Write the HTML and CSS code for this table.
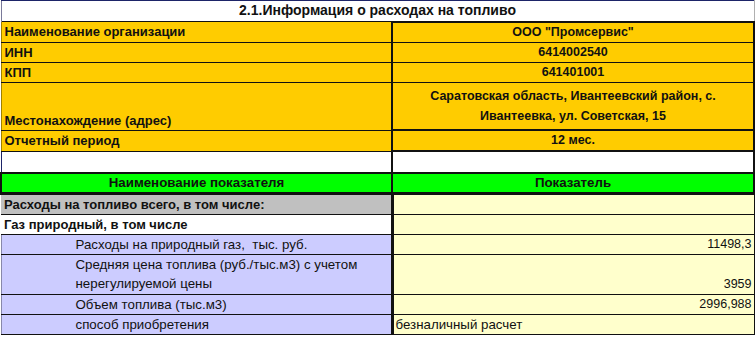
FILE: index.html
```html
<!DOCTYPE html>
<html lang="ru">
<head>
<meta charset="utf-8">
<title>2.1.Информация о расходах на топливо</title>
<link rel="stylesheet" href="styles.css">
</head>
<body>
<table class="sheet">
  <colgroup><col class="c-left"><col class="c-right"></colgroup>
  <tr class="r-title"><td colspan="2" class="title">2.1.Информация о расходах на топливо</td></tr>
  <tr class="r-20 info first"><td class="lbl">Наименование организации</td><td class="val">ООО "Промсервис"</td></tr>
  <tr class="r-20 info"><td class="lbl">ИНН</td><td class="val">6414002540</td></tr>
  <tr class="r-20 info"><td class="lbl">КПП</td><td class="val">641401001</td></tr>
  <tr class="r-addr info last"><td class="lbl bottom">Местонахождение (адрес)</td><td class="val addr">Саратовская область, Ивантеевский район, с. Ивантеевка, ул. Советская, 15</td></tr>
  <tr class="r-20 info period"><td class="lbl">Отчетный период</td><td class="val">12 мес.</td></tr>
  <tr class="r-blank"><td class="blank-l"></td><td class="blank-r"></td></tr>
  <tr class="r-20 head"><td>Наименование показателя</td><td>Показатель</td></tr>
  <tr class="r-20 total"><td class="lbl">Расходы на топливо всего, в том числе:</td><td class="num"></td></tr>
  <tr class="r-20 gas"><td class="lbl">Газ природный, в том числе</td><td class="num"></td></tr>
  <tr class="r-20 item"><td class="sub">Расходы на природный газ,&nbsp; тыс. руб.</td><td class="num">11498,3</td></tr>
  <tr class="r-40 item"><td class="sub">Средняя цена топлива (руб./тыс.м3) с учетом нерегулируемой цены</td><td class="num bottom">3959</td></tr>
  <tr class="r-20 item"><td class="sub">Объем топлива (тыс.м3)</td><td class="num">2996,988</td></tr>
  <tr class="r-20 item"><td class="sub">способ приобретения</td><td class="txt">безналичный расчет</td></tr>
</table>
</body>
</html>
```

FILE: styles.css
```css
html, body {
  margin: 0;
  padding: 0;
  background: #ffffff;
}
body {
  font-family: "Liberation Sans", Arial, sans-serif;
  color: #111111;
  width: 755px;
  height: 338px;
  overflow: hidden;
}
.sheet {
  border-collapse: collapse;
  table-layout: fixed;
  width: 753px;
  font-size: 13px;
}
.c-left { width: 391px; }
.c-right { width: 362px; }
.sheet td {
  padding: 0 3px;
  white-space: nowrap;
  overflow: hidden;
  vertical-align: middle;
  line-height: 19px;
}
.r-title { height: 21px; }
.r-20 { height: 20px; }
.r-addr { height: 48px; }
.r-blank { height: 22px; }
.r-40 { height: 40px; }

.title {
  text-align: center;
  font-weight: bold;
  font-size: 14px;
  border-top: 1px solid #1d2468;
  border-left: 1px solid #7a7a9a;
  border-right: 1px solid #b0b0b0;
  padding-left: 0;
}

.info td {
  background: #ffcc00;
  font-weight: bold;
  border-top: 1px solid #111;
  border-bottom: 1px solid #111;
}
.info .lbl { border-left: 1px solid #a08000; }
.info .val {
  text-align: center;
  font-size: 12.5px;
  border-left: 2px solid #111;
  border-right: 2px solid #111;
}
.first .val { border-top: 2px solid #111; }
.last .val { border-bottom: 2px solid #111; }
.period .val { border-bottom: 2px solid #111; }

.addr {
  white-space: normal !important;
  line-height: 20px !important;
  padding: 0 24px !important;
}
.bottom { vertical-align: bottom !important; }

.blank-l { border-left: 1px solid #1d2468; }
.blank-r {
  border-left: 2px solid #111;
  border-right: 2px solid #111;
  border-top: 1px solid #7a8ab0;
}

.head td {
  background: #00ff00;
  text-align: center;
  font-weight: bold;
  font-size: 13.3px;
  border-top: 2px solid #111;
  border-bottom: 3px solid #111;
  border-left: 2px solid #111;
  border-right: 2px solid #111;
  line-height: 17px;
}

.total .lbl {
  background: #c0c0c0;
  font-weight: bold;
  border-bottom: 1px solid #111;
}
.gas .lbl {
  background: #ffffff;
  font-weight: bold;
  border-bottom: 1px solid #111;
}
.item .sub {
  background: #ccccff;
  font-size: 13.3px;
  padding-left: 74px;
  border-bottom: 1px solid #111;
  border-left: 1px solid #8888aa;
}
.r-40 .sub {
  white-space: normal;
  vertical-align: top;
  padding-right: 20px;
}
.num, .txt {
  background: #ffffcc;
  font-size: 12.5px;
  border-left: 3px solid #111;
  border-right: 1px solid #111;
  border-bottom: 1px solid #111;
}
.num { text-align: right; padding-right: 2px !important; }
.txt { text-align: left; padding-left: 2px !important; font-size: 13.3px; }
```
